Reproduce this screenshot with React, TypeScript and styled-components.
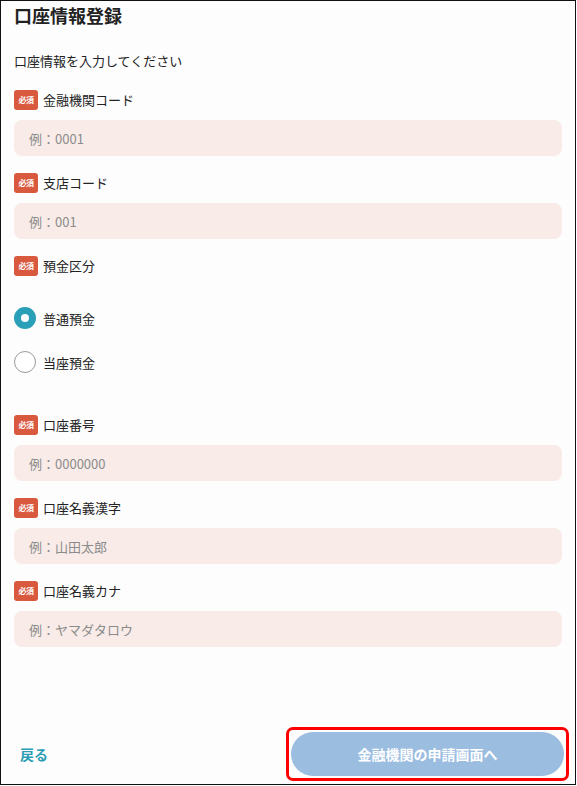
import React, { useState } from "react";
import styled, { createGlobalStyle } from "styled-components";

const GlobalStyle = createGlobalStyle`
  html, body {
    margin: 0;
    padding: 0;
    background: #ffffff;
  }
  body {
    font-family: "Noto Sans CJK JP", "Noto Sans", sans-serif;
    color: #222222;
  }
`;

type Field = {
  key: string;
  label: string;
  placeholder: string;
};

const topFields: Field[] = [
  { key: "bankCode", label: "金融機関コード", placeholder: "例：0001" },
  { key: "branchCode", label: "支店コード", placeholder: "例：001" },
];

const bottomFields: Field[] = [
  { key: "accountNumber", label: "口座番号", placeholder: "例：0000000" },
  { key: "nameKanji", label: "口座名義漢字", placeholder: "例：山田太郎" },
  { key: "nameKana", label: "口座名義カナ", placeholder: "例：ヤマダタロウ" },
];

const depositTypes = ["普通預金", "当座預金"];

const RequiredLabel = ({ children }: { children: React.ReactNode }) => (
  <StyledLabelRow>
    <StyledBadge>必須</StyledBadge>
    <span>{children}</span>
  </StyledLabelRow>
);

const TextField = ({ field }: { field: Field }) => (
  <StyledField>
    <RequiredLabel>{field.label}</RequiredLabel>
    <StyledInput type="text" placeholder={field.placeholder} />
  </StyledField>
);

export default function App() {
  const [depositType, setDepositType] = useState(depositTypes[0]);

  return (
    <>
      <GlobalStyle />
      <StyledPage>
        <StyledContent>
          <StyledTitle>口座情報登録</StyledTitle>
          <StyledLead>口座情報を入力してください</StyledLead>
          {topFields.map(field => (
            <TextField key={field.key} field={field} />
          ))}
          <StyledField>
            <RequiredLabel>預金区分</RequiredLabel>
            <StyledRadioGroup>
              {depositTypes.map(type => (
                <StyledRadioRow key={type} onClick={() => setDepositType(type)}>
                  <StyledRadio checked={depositType === type} />
                  <span>{type}</span>
                </StyledRadioRow>
              ))}
            </StyledRadioGroup>
          </StyledField>
          {bottomFields.map(field => (
            <TextField key={field.key} field={field} />
          ))}
        </StyledContent>
        <StyledFooter>
          <StyledBackLink>戻る</StyledBackLink>
          <StyledHighlight>
            <StyledSubmit disabled>金融機関の申請画面へ</StyledSubmit>
          </StyledHighlight>
        </StyledFooter>
      </StyledPage>
    </>
  );
}

const StyledPage = styled.div`
  box-sizing: border-box;
  width: 576px;
  height: 785px;
  border: 1px solid #111111;
  background: #fdfdfe;
  display: flex;
  flex-direction: column;
`;

const StyledContent = styled.div`
  padding: 0 13px;
  display: flex;
  flex-direction: column;
`;

const StyledTitle = styled.h1`
  margin: 1px 0 0;
  font-size: 18px;
  line-height: 27px;
  font-weight: 700;
  color: #222222;
`;

const StyledLead = styled.p`
  margin: 22px 0 19px;
  font-size: 13px;
  line-height: 20px;
`;

const StyledField = styled.div`
  display: flex;
  flex-direction: column;
  margin-bottom: 17px;
`;

const StyledLabelRow = styled.div`
  display: flex;
  align-items: center;
  gap: 5px;
  height: 20px;
  font-size: 13px;
  line-height: 20px;
  color: #222222;
`;

const StyledBadge = styled.span`
  display: inline-flex;
  align-items: center;
  justify-content: center;
  width: 24px;
  height: 20px;
  border-radius: 3px;
  background: #d9593f;
  color: #ffffff;
  font-size: 8px;
  font-weight: 700;
  letter-spacing: -0.5px;
`;

const StyledInput = styled.input`
  box-sizing: border-box;
  margin-top: 10px;
  width: 100%;
  height: 36px;
  padding: 0 15px;
  border: none;
  border-radius: 8px;
  background: #f8ebe8;
  font-family: inherit;
  font-size: 13px;
  color: #222222;
  outline: none;

  &::placeholder {
    color: #8b8b8b;
  }
`;

const StyledRadioGroup = styled.div`
  display: flex;
  flex-direction: column;
  margin: 20px 0 14px;
`;

const StyledRadioRow = styled.label`
  display: flex;
  align-items: center;
  gap: 7px;
  height: 44px;
  font-size: 13px;
  cursor: pointer;
`;

const StyledRadio = styled.span<{ checked: boolean }>`
  box-sizing: border-box;
  width: 22px;
  height: 22px;
  border-radius: 50%;
  background: #ffffff;
  border: ${({ checked }) => (checked ? "7px solid #2a9fb8" : "1px solid #9a9a9a")};
`;

const StyledFooter = styled.div`
  margin-top: auto;
  display: flex;
  align-items: center;
  justify-content: space-between;
  padding: 0 6px 3px 19px;
`;

const StyledBackLink = styled.span`
  font-size: 14px;
  font-weight: 700;
  color: #2a9db5;
  cursor: pointer;
`;

const StyledHighlight = styled.div`
  box-sizing: border-box;
  width: 283px;
  height: 54px;
  padding: 2px;
  border: 3px solid #ff0000;
  border-radius: 7px;
  display: flex;
`;

const StyledSubmit = styled.button`
  flex: 1;
  border: none;
  border-radius: 22px;
  background: #9bbde0;
  color: #ffffff;
  font-family: inherit;
  font-size: 14px;
  font-weight: 700;
`;
